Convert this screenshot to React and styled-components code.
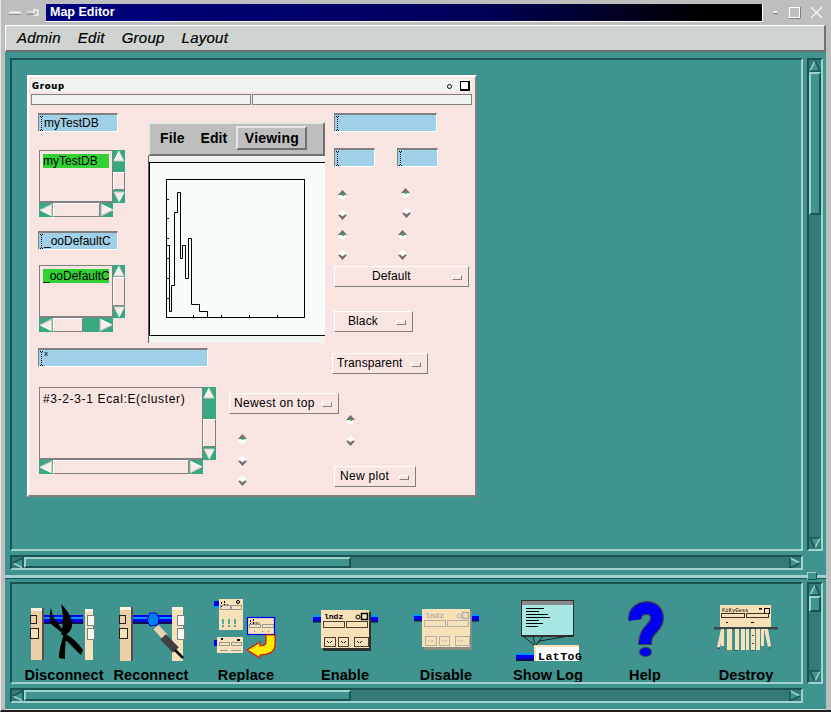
import React from 'react';
import styled, { createGlobalStyle } from 'styled-components';

const Global = createGlobalStyle`
  html, body { margin: 0; padding: 0; background: #bebebe; }
  * { box-sizing: border-box; }
`;
const TEAL = '#3f9490', TEAL_LT = '#a0d2ce', TEAL_DK = '#1a5452', TROUGH = '#337a78';
const PINK = '#f8e4e0', GREEN = '#38a880', CREAM = '#f8e0b8', BLUE_FIELD = '#a0d0e8', GRAY = '#808080';

const Frame = styled.div`
  width: 831px; height: 712px; overflow: hidden; background: #bebebe;
  font-family: "Liberation Sans", Arial, sans-serif; color: #000;
  display: flex; flex-direction: column; padding: 4px 5px 0 4px;
  border-bottom: 2px solid #202020; border-left: 1px solid #e8e8e8;
`;
const TitleRow = styled.div`display: flex; align-items: center; height: 17px; margin-bottom: 4px;`;
const Chrome = styled.svg`display: block; flex: none;`;
const TitleBar = styled.div`
  flex: none; width: 717px; height: 18px; margin-left: 5px; padding: 0 4px;
  background: linear-gradient(90deg, #000080 0%, #00005a 60%, #000 92%);
  border-right: 1px solid #fff; border-bottom: 1px solid #fff;
  color: #fff; font-weight: bold; font-size: 12.5px; line-height: 16px;
`;
const MenuBar = styled.div`
  height: 27px; display: flex; align-items: center; gap: 17px; padding: 0 0 1px 11px;
  background: #d0d4d0; border-left: 1px solid #fff; border-top: 1px solid #fff;
  border-bottom: 2px solid #707070; border-right: 2px solid #707070;
  font-style: italic; font-size: 15px; letter-spacing: .25px; -webkit-text-stroke: .2px #000;
`;
const Main = styled.div`
  flex: 1; display: flex; flex-direction: column; background: ${TEAL};
  padding: 6px 3px 5px 5px; border-bottom: 1px solid #e0e0e0;
`;
const PaneGrid = styled.div`
  display: grid; grid-template-columns: 793px 16px; column-gap: 4px; row-gap: 4px;
  grid-template-rows: ${p => p.$h}px 15px;
`;
const Work = styled.div`
  background: ${TEAL}; overflow: hidden;
  border-style: solid; border-width: 2px;
  border-color: ${TEAL_DK} ${TEAL_LT} ${TEAL_LT} ${TEAL_DK};
  padding: ${p => p.$pad};
`;
const Sash = styled.div`
  height: 8px; margin: 4px -3px 0 -5px; position: relative; flex: none;
  &::before { content: ''; position: absolute; left: 0; right: 0; top: 0; height: 3px; background: ${TEAL_LT}; border-top: 1px solid ${TEAL}; border-bottom: 1px solid ${TEAL_DK}; }
`;
const SashHandle = styled.div`
  position: absolute; right: 9px; top: -2px; width: 10px; height: 8px; background: ${TEAL};
  border: 1px solid; border-color: ${TEAL_LT} ${TEAL_DK} ${TEAL_DK} ${TEAL_LT};
`;

const Bar = styled.div`
  display: flex; flex-direction: ${p => p.$v ? 'column' : 'row'};
  width: ${p => p.$len && !p.$v ? p.$len + 'px' : p.$v ? p.$th + 'px' : 'auto'};
  height: ${p => p.$len && p.$v ? p.$len + 'px' : !p.$v ? p.$th + 'px' : 'auto'};
  flex: none; overflow: hidden;
  ${p => p.$pink
    ? `background: ${GREEN};`
    : `background: ${TROUGH}; border: 2px solid; border-color: ${TEAL_DK} ${TEAL_LT} ${TEAL_LT} ${TEAL_DK};`}
`;
const Thumb = styled.div`
  flex: none; ${p => p.$v ? `height: ${p.$size}px;` : `width: ${p.$size}px;`}
  ${p => p.$pink
    ? `background: ${PINK}; border: 1px solid; border-color: #fff ${GRAY} ${GRAY} #fff;`
    : `background: ${TEAL}; border: 2px solid; border-color: ${TEAL_LT} ${TEAL_DK} ${TEAL_DK} ${TEAL_LT};`}
`;
const Gap = styled.div`flex: ${p => p.$size === undefined ? 1 : `none`}; ${p => p.$size !== undefined ? (p.$v ? `height:${p.$size}px;` : `width:${p.$size}px;`) : ''}`;
const ArrowSvg = styled.svg`
  flex: none; display: block;
  transform: rotate(${p => ({ up: 0, right: 90, down: 180, left: 270 }[p.$dir])}deg);
`;
function Arrow({ dir, size, pink }) {
  return (
    <ArrowSvg $dir={dir} width={size} height={size} viewBox="0 0 12 12">
      {pink ? (
        <>
          <polygon points="6,1 11,11 1,11" fill="#fbeeea" />
          <path d="M6 1 L1 11" stroke="#fff" fill="none" />
          <path d="M6 1 L11 11 H1" stroke="#c8c8c0" fill="none" />
        </>
      ) : (
        <>
          <polygon points="6,1 11,11 1,11" fill={TEAL} />
          <path d="M6 1 L1 11" stroke={TEAL_LT} strokeWidth="1.5" fill="none" />
          <path d="M6 1 L11 11 H1" stroke={TEAL_DK} strokeWidth="1.5" fill="none" />
        </>
      )}
    </ArrowSvg>
  );
}
function ScrollBar({ v, pink, th, len, arrow, before, thumb }) {
  return (
    <Bar $v={v} $pink={pink} $th={th} $len={len}>
      <Arrow dir={v ? 'up' : 'left'} size={arrow} pink={pink} />
      <Gap $v={v} $size={before} />
      <Thumb $v={v} $pink={pink} $size={thumb} />
      <Gap $v={v} />
      <Arrow dir={v ? 'down' : 'right'} size={arrow} pink={pink} />
    </Bar>
  );
}

const Panel = styled.div`
  width: 450px; height: 422px; background: ${PINK}; padding: 2px 3px 2px 2px;
  border: 2px solid; border-color: #fff #808080 #808080 #fff;
`;
const PanelTitle = styled.div`
  height: 13px; background: #f0f4f0; display: flex; align-items: center; justify-content: space-between;
  font-family: "DejaVu Sans", sans-serif; font-weight: bold; font-size: 8.5px; letter-spacing: .75px; padding: 1px 2px 0 1px;
  -webkit-text-stroke: .2px #000;
`;
const TitleIcons = styled.div`display: flex; align-items: center; gap: 8px;`;
const SmallDot = styled.span`width: 5px; height: 5px; border: 1.5px solid #000; border-radius: 50%; background: #fff;`;
const SmallSq = styled.span`width: 10px; height: 10px; border: 2px solid #000; border-top-width: 1px; border-left-width: 1px; background: #fff;`;
const TopFields = styled.div`display: flex; gap: 1px; margin-top: 2px;`;
const TopField = styled.div`flex: 1; height: 11px; background: #f0f4f0; border: 1px solid #808080;`;
const Body = styled.div`display: flex; flex-direction: column; padding: 8px 0 0 7px;`;
const UpperRow = styled.div`display: flex;`;
const LeftBlock = styled.div`width: 296px; flex: none;`;
const LeftSplit = styled.div`display: flex;`;
const LeftCol = styled.div`width: 110px; flex: none; display: flex; flex-direction: column; align-items: flex-start;`;
const RightCol = styled.div`display: flex; flex-direction: column; align-items: flex-start;`;
const FieldRow = styled.div`display: flex; gap: 22px; margin-top: 16px;`;

const Field = styled.div`
  width: ${p => p.$w}px; height: ${p => p.$h || 19}px; background: ${BLUE_FIELD};
  border: 1px solid; border-color: ${GRAY} #fff #fff ${GRAY}; border-top-width: 2px;
  display: flex; align-items: center; font-size: 12px; padding-left: 1px; white-space: nowrap; overflow: hidden; flex: none;
  margin-top: ${p => p.$mt || 0}px;
`;
const TinyMark = styled.span`font-size: 8px; line-height: 8px; align-self: flex-start;`;
const CaretSvg = styled.svg`flex: none; display: block;`;
const Caret = () => (
  <CaretSvg width="4" height="15" viewBox="0 0 4 15">
    <path d="M0 .5H3M1.5 1V14M0 14.5H3" stroke="#000" strokeDasharray="1 1" fill="none" />
  </CaretSvg>
);

const ListGrid = styled.div`
  display: grid; grid-template-columns: ${p => p.$w}px ${p => p.$bar}px; grid-template-rows: ${p => p.$h}px 14px;
  margin: ${p => p.$m || 0}; flex: none;
`;
const ListBox = styled.div`
  border: 1px solid ${GRAY}; border-bottom-width: 2px; padding: 3px;
  font-size: 12px; white-space: nowrap; overflow: hidden; line-height: 14px;
`;
const Selected = styled.div`background: #33d033; width: 66px; height: 14px; overflow: hidden;`;
const PlainLine = styled.div`padding-top: 1px; letter-spacing: .65px;`;

const PlotWrap = styled.div`width: 177px; height: 221px; margin-top: 9px; flex: none;`;
const PlotMenu = styled.div`
  height: 34px; background: #bebebe; display: flex; align-items: center; padding: 0 0 2px 10px;
  border: 2px solid; border-color: #e4e8e4 #707070 #707070 #e4e8e4;
  font-size: 14px; font-weight: bold; letter-spacing: .1px;
`;
const PlotItem = styled.div`margin-right: 16px;`;
const PlotActive = styled.div`
  margin-left: -7px; height: 24px; width: 71px; display: flex; align-items: center; justify-content: center;
  border: 2px solid; border-color: #e4e8e4 #707070 #707070 #e4e8e4; letter-spacing: .2px;
`;
const PlotSvg = styled.svg`display: block;`;

const ToggleGrid = styled.div`
  display: grid; grid-template-columns: 63px 63px; grid-template-rows: 21px 19px 21px 11px; margin-top: 22px;
`;
const ToggleSvg = styled.svg`
  display: block; flex: none;
  margin: ${p => p.$m || '0'};
`;
function Toggle({ up, m }) {
  return (
    <ToggleSvg $m={m} width="11" height="11" viewBox="0 0 11 11">
      {up ? (
        <>
          <polygon points="5.5,5 10,8 5.5,11 1,8" fill="#fff" />
          <polygon points="5.5,1 10,6 1,6" fill="#707070" />
          <rect x="5" y="5" width="2" height="2" fill="#22cc33" />
        </>
      ) : (
        <>
          <polygon points="5.5,0 10,3 5.5,6 1,3" fill="#fff" />
          <polygon points="1,5 3,4.5 5.5,6.5 8,4.5 10,5 5.5,10" fill="#707070" />
        </>
      )}
    </ToggleSvg>
  );
}
const Option = styled.div`
  width: ${p => p.$w}px; height: 21px; flex: none; display: flex; align-items: center;
  position: relative; padding: 0 0 2px ${p => p.$pl}px; font-size: 12px; letter-spacing: ${p => p.$ls || '.1px'};
  border: 1px solid; border-color: #fff ${GRAY} ${GRAY} #fff; margin: ${p => p.$m || 0};
`;
const Indicator = styled.span`
  position: absolute; right: 6px; top: 8px; width: 10px; height: 5px;
  border: 1px solid; border-color: #fff ${GRAY} ${GRAY} #fff;
`;
const LowerRow = styled.div`display: flex; margin-top: 13px;`;
const MidCol = styled.div`width: 105px; margin-left: 13px; flex: none; display: flex; flex-direction: column; align-items: flex-start;`;
const NewCol = styled.div`display: flex; flex-direction: column; align-items: flex-start;`;

const ToolRow = styled.div`display: flex; padding: 14px 0 0 2px;`;
const Tool = styled.div`width: ${p => p.$w}px; flex: none; display: flex; flex-direction: column; align-items: center;`;
const ToolSvg = styled.svg`display: block; flex: none; overflow: visible;`;
const ToolLabel = styled.div`
  font-size: 14.5px; font-weight: bold; letter-spacing: .1px; line-height: 16px; margin-top: 3px; white-space: nowrap;
`;

const Wire = ({ x, y, w }) => (
  <g>
    <rect x={x} y={y} width={w} height="9" fill="#0000f0" />
    <rect x={x} y={y + 2} width={w} height="2" fill="#0098ff" />
    <rect x={x} y={y + 7} width={w} height="2" fill="#101050" />
  </g>
);
const Post = ({ x, w, y = 608, h = 52 }) => (
  <g>
    <rect x={x} y={y} width={w} height={h} fill={CREAM} />
    <rect x={x} y={y} width={w} height="3" fill="#fff4e0" />
  </g>
);
const Disconnect = () => (
  <ToolSvg width="70" height="66" viewBox="30 598 70 66">
    <Post x={32} w={13} />
    <rect x={32} y={611} width={11} height={49} fill="#eccfa6" />
    <rect x={43} y={608} width={2} height={52} fill="#505050" />
    <rect x={31.5} y={615.5} width={6} height={8} fill="none" stroke="#202020" />
    <rect x={31.5} y={628.5} width={8} height={10} fill={CREAM} stroke="#202020" />
    <Wire x={45} y={615} w={39} />
    <Post x={86} w={8} y={609} h={51} />
    <rect x={88.5} y={615.5} width={7} height={10} fill="#f8f8f0" stroke="#808080" />
    <rect x={88.5} y={628.5} width={7} height={11} fill="#f8fcf8" stroke="#808080" />
    <path d="M62 604 C68 610 74 618 73 626 C72 632 68 634 65 636 L62 634 C65 624 64 612 62 604Z" fill="#000" />
    <path d="M52 608 L54 617 L64 630 L62 632 L52 624 C50 618 51 612 52 608Z" fill="#000" />
    <path d="M65 634 C62 644 60 650 60 658 L66 659 C66 650 66 642 68 636Z" fill="#000" />
    <path d="M66 634 C72 636 80 644 84 650 L82 655 C76 650 70 642 64 638Z" fill="#000" />
  </ToolSvg>
);
const Reconnect = () => (
  <ToolSvg width="70" height="66" viewBox="116 598 70 66">
    <Post x={120} w={13} y={607} h={54} />
    <rect x={120} y={610} width={11} height={51} fill="#eccfa6" />
    <rect x={131} y={607} width={2} height={54} fill="#505050" />
    <rect x={119.5} y={615.5} width={6} height={8} fill="none" stroke="#202020" />
    <rect x={119.5} y={628.5} width={8} height={10} fill={CREAM} stroke="#202020" />
    <Post x={172} w={11} y={607} h={54} />
    <rect x={177.5} y={615.5} width={7} height={10} fill="#f8f8f0" stroke="#808080" />
    <rect x={177.5} y={628.5} width={7} height={11} fill="#f8fcf8" stroke="#808080" />
    <Wire x={133} y={615} w={39} />
    <path d="M150 613 H156 L159 618 L158 625 L150 626 L147 620Z" fill="#0080f0" stroke="#0000d0" />
    <path d="M156 627 L165 637" stroke="#e8d0b0" strokeWidth="7" />
    <path d="M163 637 L176 650" stroke="#404040" strokeWidth="8" />
    <path d="M175 650 L183 658" stroke="#000" strokeWidth="2.5" />
  </ToolSvg>
);
const MiniTitle = ({ x, y, w, c = '#000' }) => (
  <path d={`M${x} ${y + 1} v5 M${x + 3} ${y} v5 M${x + 2} ${y + 4} h${w - 2}`} stroke={c} fill="none" strokeDasharray="2 1" />
);
const Replace = () => (
  <ToolSvg width="70" height="66" viewBox="211 598 70 66">
    <rect x={219} y={599} width={24} height={31} fill={CREAM} />
    <rect x={214} y={601} width={5} height={6} fill="#0000f0" />
    <rect x={214} y={606} width={5} height={2} fill="#0098ff" />
    <MiniTitle x={221.5} y={601} w={8} />
    <circle cx={238} cy={602} r={1.5} fill="none" stroke="#000" />
    <rect x={220.5} y={605.5} width={10} height={4} fill="none" stroke="#999" />
    <rect x={231.5} y={605.5} width={10} height={4} fill="none" stroke="#999" />
    <path d="M223 619v8M229 619v8M235 619v8" stroke="#1a9a98" strokeWidth="1.5" strokeDasharray="5 1" />
    <rect x={217} y={637} width={26} height={16} fill={CREAM} />
    <rect x={214} y={640} width={3} height={6} fill="#0000f0" />
    <path d="M221 639h2M237 640h3" stroke="#000" strokeWidth="2" />
    <rect x={219.5} y={642.5} width={10} height={3} fill="none" stroke="#999" />
    <rect x={231.5} y={642.5} width={10} height={3} fill="none" stroke="#999" />
    <path d="M220 650.5h8M231 650.5h10" stroke="#999" />
    <rect x={247.5} y={617.5} width={27} height={17} fill={CREAM} stroke="#0000f0" strokeWidth="1.2" />
    <MiniTitle x={250.5} y={619} w={9} />
    <rect x={249.5} y={624.5} width={11} height={3} fill="none" stroke="#999" />
    <rect x={262.5} y={624.5} width={11} height={3} fill="none" stroke="#999" />
    <path d="M254 631.5h1M262 631.5h1M268 631.5h1" stroke="#1a9a98" />
    <path d="M266 635 H275 V645 C275 652 268 655 260 655 V658 L247 650 L260 642 V646 C264 646 266 645 266 642Z" fill="#ffee00" stroke="#e01010" strokeWidth="1.2" />
  </ToolSvg>
);
const MiniWindow = ({ x, y, line, box, shadow }) => (
  <g>
    <rect x={x - 8} y={y + 5} width={8} height={7} fill="#0000f0" />
    <rect x={x - 8} y={y + 5} width={8} height={2} fill="#0098ff" />
    <rect x={x - 8} y={y + 11} width={8} height={1.5} fill="#101050" />
    <rect x={x + 49} y={y + 5} width={8} height={7} fill="#0000f0" />
    <rect x={x + 49} y={y + 5} width={8} height={2} fill="#0098ff" />
    <rect x={x + 49} y={y + 11} width={8} height={1.5} fill="#101050" />
    <rect x={x + 2} y={y + 2} width={48} height={39} fill={shadow} />
    <rect x={x} y={y} width={48} height={38} fill={CREAM} />
    <text x={x + 3} y={y + 9} fontFamily="Liberation Mono, monospace" fontWeight="bold" fontSize="8" fill={line}>lndz</text>
    <circle cx={x + 37} cy={y + 7} r={2} fill="none" stroke={line} />
    <rect x={x + 40.5} y={y + 3.5} width={6} height={6} fill="none" stroke={line} strokeWidth="1.5" />
    <rect x={x + 2.5} y={y + 11.5} width={21} height={6} fill="none" stroke={box} />
    <rect x={x + 25.5} y={y + 11.5} width={21} height={6} fill="none" stroke={box} />
    {[[3, 11], [17, 10], [33, 14]].map(([bx, w]) => (
      <g key={bx}>
        <rect x={x + bx + .5} y={y + 27.5} width={w} height={9} fill="none" stroke={box} />
        <path d={`M${x + bx + 3} ${y + 31}l2 2m1 0l2 -2`} stroke={line} fill="none" />
      </g>
    ))}
  </g>
);
const Enable = () => (
  <ToolSvg width="70" height="66" viewBox="311 598 70 66"><MiniWindow x={322} y={610} line="#000" box="#504030" shadow="#303030" /></ToolSvg>
);
const Disable = () => (
  <ToolSvg width="70" height="66" viewBox="411 598 70 66"><MiniWindow x={422} y={609} line="#b0b0a8" box="#b0b0a8" shadow="#8a8a80" /></ToolSvg>
);
const ShowLog = () => (
  <ToolSvg width="70" height="66" viewBox="513 598 70 66">
    <rect x={521} y={600} width={53} height={37} fill="#303030" />
    <rect x={522} y={601} width={51} height={34} fill="#a8e8e4" />
    <rect x={522} y={601} width={51} height={4} fill="#888" />
    <path d="M526 608.5h18M526 611.5h13M526 614.5h22M526 617.5h24M526 620.5h13M526 623.5h17M526 626.5h12" stroke="#000" />
    <path d="M523 636 L534 645 M533 636 L535 645 M543 636 L536 645 M574 635 L540 641 L536 645" stroke="#202020" fill="none" />
    <rect x={534} y={645} width={45} height={16} fill="#fff" />
    <rect x={534} y={645} width={45} height={2} fill={CREAM} />
    <rect x={534} y={645} width={2} height={16} fill={CREAM} />
    <rect x={516} y={653} width={18} height={6} fill="#0000f0" />
    <rect x={516} y={653} width={18} height={2} fill="#0098ff" />
    <rect x={516} y={659} width={18} height={2} fill="#101050" />
    <text x={538} y={660} fontFamily="Liberation Mono, monospace" fontWeight="bold" fontSize="11.5" letterSpacing=".5">LatToG</text>
  </ToolSvg>
);
const Help = () => (
  <ToolSvg width="60" height="66" viewBox="615 598 60 66">
    <path d="M635 620 C633 606 657 603 657 618 C657 629 645 628 645 645" fill="none" stroke="#404050" strokeWidth="14" />
    <ellipse cx={645.5} cy={652} rx={6.5} ry={5} fill="#404050" />
    <path d="M635 620 C633 606 657 603 657 618 C657 629 645 628 645 644" fill="none" stroke="#0000f0" strokeWidth="11.5" />
    <ellipse cx={645.5} cy={652} rx={5.5} ry={4} fill="#0000f0" />
  </ToolSvg>
);
const strips = [[721, 3], [727, 4], [731, 1], [735, 4], [741, 4], [746, 3], [751, 4], [756, 4], [761, 3]];
const Destroy = () => (
  <ToolSvg width="70" height="66" viewBox="711 598 70 66">
    <rect x={720} y={605} width={51} height={23} fill={CREAM} />
    <text x={722} y={612} fontFamily="Liberation Mono, monospace" fontSize="5.5">KiKyGess</text>
    <rect x={759} y={608} width={3} height={1.5} fill="#000" />
    <rect x={764.5} y={608.5} width={5} height={5} fill="none" stroke="#000" />
    <rect x={721.5} y={613.5} width={23} height={4} fill="none" stroke="#403020" />
    <rect x={746.5} y={613.5} width={22} height={4} fill="none" stroke="#403020" />
    <path d="M726 622.5h2M751 622.5h3" stroke="#000" />
    <rect x={714} y={627} width={64} height={2.5} fill="#3a4a4a" />
    {strips.map(([x, w], i) => (
      <rect key={i} x={x} y={629} width={w} height={i === 0 || i === 8 ? 17 : 21} fill={CREAM} />
    ))}
    <path d="M721 629 L717 647 L720 647 L724 629ZM764 629 L768 647 L771 646 L768 629Z" fill={CREAM} />
    <path d="M717 648.5h3M734 650.5h4M751 650.5h3M770 647.5l-2 1" stroke="#505050" />
    <path d="M752 635.5h2M752 643.5h2" stroke="#505050" />
  </ToolSvg>
);

const toolDefs = [
  ['Disconnect', 100, Disconnect], ['Reconnect', 74, Reconnect], ['Replace', 116, Replace], ['Enable', 82, Enable],
  ['Disable', 120, Disable], ['Show Log', 84, ShowLog], ['Help', 110, Help], ['Destroy', 92, Destroy],
];

const hist = 'M167 245.5H169.5V311.5H171.5V285.5H174.5V212.5H177.5V192.5H180.5V258.5H182.5V245.5H185.5V278.5H188.5V238.5H191.5V304.5H199.5V311.5H207.5V318';
const Plot = () => (
  <PlotSvg width="177" height="187" viewBox="148 156 177 187">
    <rect x={148} y={156} width={177} height={187} fill="#f0f4f0" />
    <rect x={147} y={156} width={2} height={187} fill="#606060" />
    <rect x={149.5} y={162.5} width={180} height={173} fill="#f8fcf8" stroke="#000" />
    <rect x={166.5} y={179.5} width={138} height={138} fill="none" stroke="#000" />
    <path d={hist} fill="none" stroke="#000" />
    <path d="M167 199.5h2M167 218.5h2M167 238.5h2M167 258.5h2M167 278.5h2M167 298.5h2M193.5 315v3M221.5 315v3M249.5 315v3M277.5 315v3" stroke="#000" />
  </PlotSvg>
);

export default function App() {
  return (
    <Frame>
      <Global />
      <TitleRow>
        <Chrome width="36" height="17" viewBox="0 0 36 17">
          <path d="M4 8.5h12" stroke="#f4f4f4" strokeWidth="2" />
          <path d="M4 10.5h12" stroke="#909090" />
          <path d="M22 8h8M29 5v7M33 5v7M29 5l4 2M29 12l4-2" stroke="#f4f4f4" strokeWidth="1.2" fill="none" />
          <path d="M22 10h8" stroke="#808080" />
        </Chrome>
        <TitleBar>Map Editor</TitleBar>
        <Chrome width="63" height="17" viewBox="0 0 63 17">
          <rect x="11" y="7" width="3" height="3" fill="#fff" />
          <rect x="11" y="9" width="3" height="1" fill="#606060" />
          <rect x="26.5" y="3.5" width="10" height="10" fill="none" stroke="#fff" />
          <path d="M26 14.5h11M37.5 3v11" stroke="#808080" />
          <path d="M48 3 L59 14 M59 3 L48 14" stroke="#f4f4f4" strokeWidth="1.4" />
        </Chrome>
      </TitleRow>
      <MenuBar>
        <span>Admin</span><span>Edit</span><span>Group</span><span>Layout</span>
      </MenuBar>
      <Main>
        <PaneGrid $h={493}>
          <Work $pad="15px 0 0 15px">
            <Panel>
              <PanelTitle>
                <span>Group</span>
                <TitleIcons><SmallDot /><SmallSq /></TitleIcons>
              </PanelTitle>
              <TopFields><TopField /><TopField /></TopFields>
              <Body>
                <UpperRow>
                  <LeftBlock>
                    <LeftSplit>
                      <LeftCol>
                        <Field $w={80}><Caret />myTestDB</Field>
                        <ListGrid $w={74} $bar={12} $h={53} $m="18px 0 0 1px">
                          <ListBox><Selected>myTestDB</Selected></ListBox>
                          <ScrollBar v pink th={12} len={53} arrow={12} before={10} thumb={18} />
                          <ScrollBar pink th={14} len={74} arrow={14} before={0} thumb={47} />
                        </ListGrid>
                        <Field $w={80} $mt={14}><Caret />_ooDefaultC</Field>
                        <ListGrid $w={74} $bar={12} $h={53} $m="15px 0 0 1px">
                          <ListBox><Selected>_ooDefaultC</Selected></ListBox>
                          <ScrollBar v pink th={12} len={53} arrow={12} before={0} thumb={29} />
                          <ScrollBar pink th={14} len={74} arrow={14} before={0} thumb={30} />
                        </ListGrid>
                      </LeftCol>
                      <PlotWrap>
                        <PlotMenu>
                          <PlotItem>File</PlotItem><PlotItem>Edit</PlotItem>
                          <PlotActive>Viewing</PlotActive>
                        </PlotMenu>
                        <Plot />
                      </PlotWrap>
                    </LeftSplit>
                    <Field $w={170} $mt={5}><Caret /><TinyMark>x</TinyMark></Field>
                  </LeftBlock>
                  <RightCol>
                    <Field $w={103}><Caret /></Field>
                    <FieldRow>
                      <Field $w={41}><Caret /></Field>
                      <Field $w={41}><Caret /></Field>
                    </FieldRow>
                    <ToggleGrid>
                      <Toggle up m="0 0 0 3px" /><Toggle up m="-2px 0 0 3px" />
                      <Toggle m="0 0 0 3px" /><Toggle m="-2px 0 0 4px" />
                      <Toggle up m="0 0 0 3px" /><Toggle up m="0" />
                      <Toggle m="0 0 0 3px" /><Toggle m="0" />
                    </ToggleGrid>
                    <Option $w={135} $pl={37} $m="5px 0 0 0">Default<Indicator /></Option>
                    <Option $w={79} $pl={13} $m="24px 0 0 0">Black<Indicator /></Option>
                    <Option $w={96} $pl={4} $m="21px 0 0 -2px">Transparent<Indicator /></Option>
                  </RightCol>
                </UpperRow>
                <LowerRow>
                  <ListGrid $w={164} $bar={13} $h={73} $m="0 0 0 1px">
                    <ListBox><PlainLine>#3-2-3-1 Ecal:E(cluster)</PlainLine></ListBox>
                    <ScrollBar v pink th={13} len={73} arrow={12} before={20} thumb={28} />
                    <ScrollBar pink th={14} len={164} arrow={14} before={0} thumb={136} />
                  </ListGrid>
                  <MidCol>
                    <Option $w={110} $pl={4} $ls=".3px" $m="6px 0 0 0">Newest on top<Indicator /></Option>
                    <Toggle up m="19px 0 0 8px" />
                    <Toggle m="12px 0 0 8px" />
                    <Toggle m="9px 0 0 8px" />
                  </MidCol>
                  <NewCol>
                    <Toggle up m="27px 0 0 11px" />
                    <Toggle m="11px 0 0 11px" />
                    <Option $w={82} $pl={5} $ls=".3px" $m="19px 0 0 0">New plot<Indicator /></Option>
                  </NewCol>
                </LowerRow>
              </Body>
            </Panel>
          </Work>
          <ScrollBar v th={16} len={493} arrow={12} before={0} thumb={143} />
          <ScrollBar th={15} len={793} arrow={12} before={0} thumb={327} />
        </PaneGrid>
        <Sash><SashHandle /></Sash>
        <PaneGrid $h={102}>
          <Work $pad="0">
            <ToolRow>
              {toolDefs.map(([label, w, Icon]) => (
                <Tool key={label} $w={w}>
                  <Icon />
                  <ToolLabel>{label}</ToolLabel>
                </Tool>
              ))}
            </ToolRow>
          </Work>
          <ScrollBar v th={16} len={102} arrow={12} before={0} thumb={16} />
          <ScrollBar th={15} len={793} arrow={12} before={0} thumb={327} />
        </PaneGrid>
      </Main>
    </Frame>
  );
}
